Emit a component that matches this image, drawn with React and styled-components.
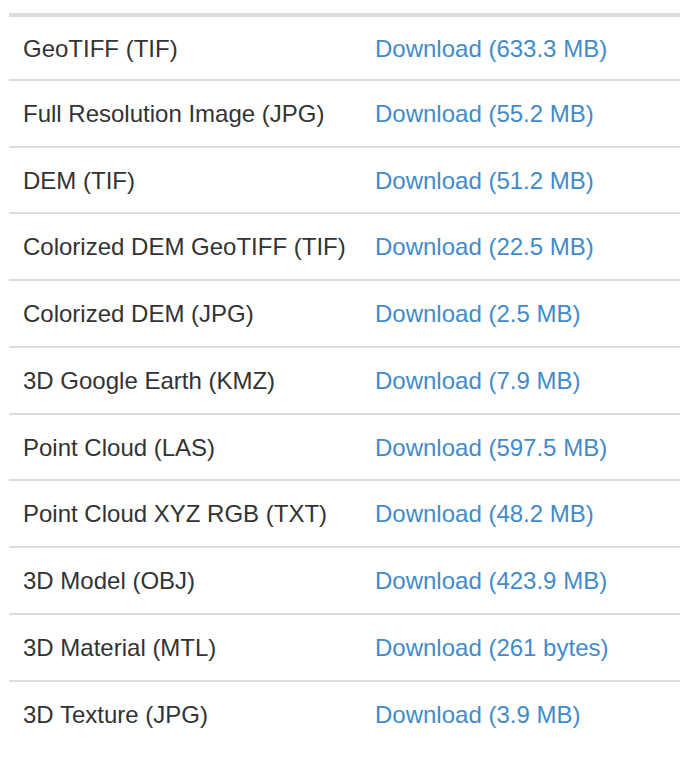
import React from 'react';
import styled, { createGlobalStyle } from 'styled-components';

const GlobalStyle = createGlobalStyle`
  html, body {
    margin: 0;
    padding: 0;
    background: #fff;
    overflow: hidden;
  }
  body {
    font-family: "Liberation Sans", Arial, Helvetica, sans-serif;
    color: #333;
  }
`;

const Page = styled.div`
  padding: 13px 0 0 9px;
`;

const Table = styled.table`
  width: 100%;
  table-layout: fixed;
  border-collapse: collapse;
  border-top: 4px solid #ddd;
  font-size: 24px;
`;

const NameCol = styled.col`
  width: 352px;
`;

const Row = styled.tr`
  border-top: ${(p) => (p.first ? 'none' : '2px solid #ddd')};
`;

const Cell = styled.td`
  padding: ${(p) => (p.first ? '16px 14px 13px' : '17px 14px 15px')};
  line-height: 32.75px;
  vertical-align: middle;
  white-space: nowrap;
`;

const Link = styled.a`
  color: #428bca;
  text-decoration: none;
  cursor: pointer;

  &:hover {
    text-decoration: underline;
  }
`;

const files = [
  ['GeoTIFF (TIF)', '633.3 MB'],
  ['Full Resolution Image (JPG)', '55.2 MB'],
  ['DEM (TIF)', '51.2 MB'],
  ['Colorized DEM GeoTIFF (TIF)', '22.5 MB'],
  ['Colorized DEM (JPG)', '2.5 MB'],
  ['3D Google Earth (KMZ)', '7.9 MB'],
  ['Point Cloud (LAS)', '597.5 MB'],
  ['Point Cloud XYZ RGB (TXT)', '48.2 MB'],
  ['3D Model (OBJ)', '423.9 MB'],
  ['3D Material (MTL)', '261 bytes'],
  ['3D Texture (JPG)', '3.9 MB'],
];

const App = () => {
  return (
    <Page>
      <GlobalStyle />
      <Table>
        <colgroup>
          <NameCol />
          <col />
        </colgroup>
        <tbody>
          {files.map(([name, size], i) => (
            <Row key={name} first={i === 0}>
              <Cell first={i === 0}>{name}</Cell>
              <Cell first={i === 0}>
                <Link href="#">Download ({size})</Link>
              </Cell>
            </Row>
          ))}
        </tbody>
      </Table>
    </Page>
  );
};

export default App;
